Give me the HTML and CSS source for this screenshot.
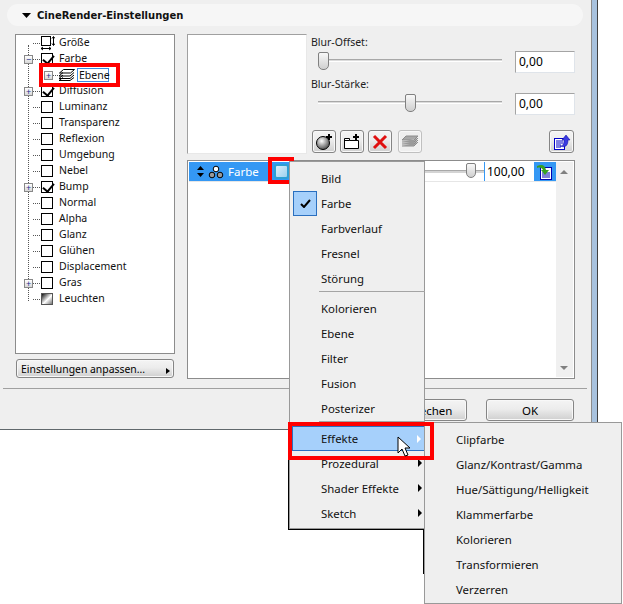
FILE: index.html
```html
<!DOCTYPE html>
<html lang="de">
<head>
<meta charset="utf-8">
<title>CineRender-Einstellungen</title>
<link rel="stylesheet" href="styles.css">
</head>
<body>
<div class="page">
  <div class="dialog">
    <div class="header">
      <svg class="caret" width="9" height="5" viewBox="0 0 9 5"><path d="M0 0h9L4.500 5z" fill="#000"/></svg>
      <span class="title">CineRender-Einstellungen</span>
    </div>
    <div class="main">
      <div class="left">
        <div class="tree">
          <span class="tree-line"></span>
          <div class="tree-row"><span class="exp-slot"></span><span class="dash"></span><svg class="ico size" width="14" height="15" viewBox="0 0 14 15"><rect x=".5" y=".5" width="9" height="9" fill="#fff" stroke="#000"/><path d="M12.500 1v8M11 2.500l1.500-2 1.500 2M11 7.500l1.500 2 1.500-2M0 12.500h10M2 11l-2 1.500 2 1.500M8 11l2 1.500-2 1.500" fill="none" stroke="#000"/></svg><span class="lbl">Größe</span></div>
          <div class="tree-row"><span class="exp-slot"><span class="exp">−</span></span><span class="dash"></span><span class="cb on"></span><span class="lbl">Farbe</span></div>
          <div class="tree-row sub"><span class="exp-slot"><span class="exp">+</span></span><span class="dash short"></span><svg class="ico layers" width="17" height="12" viewBox="0 0 17 12"><path d="M5.500.5H16.500L12.500 4H1.500zM5 3.500L1 7H12L16 3.500M5 6L1 9.500H12L16 6M5 8.500L1 11.500H12L16 8.500" fill="#fff" stroke="#000" stroke-width="1"/></svg><span class="lbl sel">Ebene</span></div>
          <div class="tree-row"><span class="exp-slot"><span class="exp">+</span></span><span class="dash"></span><span class="cb on"></span><span class="lbl">Diffusion</span></div>
          <div class="tree-row"><span class="exp-slot"></span><span class="dash"></span><span class="cb"></span><span class="lbl">Luminanz</span></div>
          <div class="tree-row"><span class="exp-slot"></span><span class="dash"></span><span class="cb"></span><span class="lbl">Transparenz</span></div>
          <div class="tree-row"><span class="exp-slot"></span><span class="dash"></span><span class="cb"></span><span class="lbl">Reflexion</span></div>
          <div class="tree-row"><span class="exp-slot"></span><span class="dash"></span><span class="cb"></span><span class="lbl">Umgebung</span></div>
          <div class="tree-row"><span class="exp-slot"></span><span class="dash"></span><span class="cb"></span><span class="lbl">Nebel</span></div>
          <div class="tree-row"><span class="exp-slot"><span class="exp">+</span></span><span class="dash"></span><span class="cb on"></span><span class="lbl">Bump</span></div>
          <div class="tree-row"><span class="exp-slot"></span><span class="dash"></span><span class="cb"></span><span class="lbl">Normal</span></div>
          <div class="tree-row"><span class="exp-slot"></span><span class="dash"></span><span class="cb"></span><span class="lbl">Alpha</span></div>
          <div class="tree-row"><span class="exp-slot"></span><span class="dash"></span><span class="cb"></span><span class="lbl">Glanz</span></div>
          <div class="tree-row"><span class="exp-slot"></span><span class="dash"></span><span class="cb"></span><span class="lbl">Glühen</span></div>
          <div class="tree-row"><span class="exp-slot"></span><span class="dash"></span><span class="cb"></span><span class="lbl">Displacement</span></div>
          <div class="tree-row"><span class="exp-slot"><span class="exp">+</span></span><span class="dash"></span><span class="cb"></span><span class="lbl">Gras</span></div>
          <div class="tree-row"><span class="exp-slot"></span><span class="dash"></span><span class="cb grad"></span><span class="lbl">Leuchten</span></div>
        </div>
        <div class="btn adapt"><span>Einstellungen anpassen...</span><svg width="4" height="6" viewBox="0 0 4 6"><path d="M0 0l4 3-4 3z" fill="#000"/></svg></div>
      </div>
      <div class="right">
        <div class="top">
          <div class="preview"></div>
          <div class="controls">
            <div class="field">
              <div class="field-label">Blur-Offset:</div>
              <div class="field-row">
                <div class="slider"><span class="knob k-start"></span></div>
                <div class="value">0,00</div>
              </div>
            </div>
            <div class="field">
              <div class="field-label">Blur-Stärke:</div>
              <div class="field-row">
                <div class="slider"><span class="knob k-mid"></span></div>
                <div class="value">0,00</div>
              </div>
            </div>
            <div class="tools">
              <div class="btn tool"><svg width="18" height="18" viewBox="0 0 18 18"><defs><radialGradient id="sph" cx="0.4" cy="0.35" r="0.7"><stop offset="0" stop-color="#fff"/><stop offset="1" stop-color="#444"/></radialGradient></defs><circle cx="8" cy="10" r="6.500" fill="url(#sph)" stroke="#000"/><path d="M14 1v6M11 4h6" stroke="#000" stroke-width="2"/></svg></div>
              <div class="btn tool"><svg width="18" height="18" viewBox="0 0 18 18"><path d="M1.500 5.500h5v2h9v8h-14zM1.500 7.500h5" fill="#fff" stroke="#000"/><path d="M13 1v6M10 4h6" stroke="#000" stroke-width="2"/></svg></div>
              <div class="btn tool"><svg width="18" height="18" viewBox="0 0 18 18"><path d="M3 3l12 12M15 3L3 15" stroke="#e01010" stroke-width="3" fill="none"/></svg></div>
              <div class="btn tool off"><svg width="18" height="14" viewBox="0 0 18 14"><path d="M5 1h12l-4 4H1zM1 7h12l4-4M1 9h12l4-4M1 11h12l4-4" fill="#a8a8a8" stroke="#8c8c8c"/></svg></div>
              <div class="tool-gap"></div>
              <div class="btn tool export"><svg width="18" height="18" viewBox="0 0 18 18"><rect x="1.500" y="5.500" width="10" height="11" fill="#fff" stroke="#0000c8"/><path d="M3 8h7M3 10h7M3 12h5M3 14h5" stroke="#0000c8"/><path d="M7 13c3 0 4-2 4-6H9l4-5 4 5h-2c0 6-3 8-8 6z" fill="#3a3ae0" stroke="#0000a0" stroke-width=".5"/></svg></div>
            </div>
          </div>
        </div>
        <div class="list">
          <div class="list-body">
            <div class="list-row">
              <div class="row-name">
                <svg width="7" height="11" viewBox="0 0 7 11"><path d="M3.500 0L7 4H0zM3.500 11L0 7h7z" fill="#000"/></svg>
                <svg class="tri" width="16" height="14" viewBox="0 0 16 14"><circle cx="8" cy="4" r="2.800" fill="#fff" stroke="#000"/><circle cx="4" cy="10" r="2.800" fill="#999" stroke="#000"/><circle cx="12" cy="10" r="2.800" fill="#999" stroke="#000"/></svg>
                <span>Farbe</span>
              </div>
              <div class="swatch-cell"><span class="swatch"></span></div>
              <div class="row-slider"><span class="knob k-end"></span></div>
              <div class="row-value">100,00</div>
              <div class="row-icon"><svg width="18" height="16" viewBox="0 0 18 16"><rect x="4.500" y="3.500" width="11" height="12" fill="#fff" stroke="#0000b0"/><path d="M6 9h8M6 11h8M6 13h8" stroke="#0000b0"/><path d="M1 2c5-2 8-1 9 4h3l-4 5-4-5h2C6 4 4 3 1 4z" fill="#38a020"/></svg></div>
            </div>
          </div>
          <div class="scrollbar"><span class="arrow up"></span><span class="arrow down"></span></div>
        </div>
      </div>
    </div>
    <div class="footer">
      <div class="btn action">Abbrechen</div>
      <div class="btn action">OK</div>
    </div>
  </div>

  <div class="mark mark-ebene"></div>
  <div class="mark mark-swatch"></div>

  <span class="shadow shadow-menu"></span>
  <span class="shadow shadow-sub"></span>

  <div class="menu main-menu">
    <div class="item">Bild</div>
    <div class="item checked"><span class="check"><svg width="11" height="9" viewBox="0 0 11 9"><path d="M1 5l3 3 6-7" fill="none" stroke="#000" stroke-width="2"/></svg></span>Farbe</div>
    <div class="item">Farbverlauf</div>
    <div class="item">Fresnel</div>
    <div class="item">Störung</div>
    <div class="sep"></div>
    <div class="item">Kolorieren</div>
    <div class="item">Ebene</div>
    <div class="item">Filter</div>
    <div class="item">Fusion</div>
    <div class="item">Posterizer</div>
    <div class="sep"></div>
    <div class="item has-sub active">Effekte</div>
    <div class="item has-sub">Prozedural</div>
    <div class="item has-sub">Shader Effekte</div>
    <div class="item has-sub">Sketch</div>
  </div>

  <div class="menu sub-menu">
    <div class="item">Clipfarbe</div>
    <div class="item">Glanz/Kontrast/Gamma</div>
    <div class="item">Hue/Sättigung/Helligkeit</div>
    <div class="item">Klammerfarbe</div>
    <div class="item">Kolorieren</div>
    <div class="item">Transformieren</div>
    <div class="item">Verzerren</div>
  </div>

  <div class="mark mark-effekte"></div>
  <svg class="cursor" width="14" height="22" viewBox="0 0 14 22"><path d="M1 1v16l4-4 3 7 3-1-3-7h5z" fill="#fff" stroke="#000"/></svg>
</div>
</body>
</html>
```
FILE: styles.css
```css
* { box-sizing: border-box; }
html, body { margin: 0; background: #fff; }
.page {
  position: relative;
  width: 623px;
  height: 604px;
  overflow: hidden;
  font-family: "Noto Sans", sans-serif;
  font-size: 10.5px;
  color: #000;
}
.dialog {
  width: 597px;
  height: 430px;
  background: #efefef;
  border-right: 5px solid #a8c2de;
  border-bottom: 1px solid #60686c;
  padding-top: 4px;
  box-shadow: inset -1px 0 0 #8c8c8c, 1px 0 0 #404040;
  display: flex;
  flex-direction: column;
}
.header {
  margin: 0 9px 0 7px;
  height: 22px;
  background: #f6f6f6;
  border-radius: 11px;
  display: flex;
  align-items: center;
  padding-left: 15px;
}
.caret { margin-right: 6px; }
.title {
  font-family: "DejaVu Sans", sans-serif;
  font-weight: 700;
  font-size: 10px;
  color: #111;
}
.main {
  display: flex;
  margin-top: 8px;
  padding-left: 15px;
}
.left {
  width: 160px;
  display: flex;
  flex-direction: column;
}
.tree {
  position: relative;
  height: 320px;
  background: #fff;
  border: 1px solid #8c8c8c;
}
.tree-line {
  position: absolute;
  left: 12px;
  top: 10px;
  height: 256px;
  border-left: 1px dotted #555;
}
.tree-row {
  position: relative;
  height: 16px;
  display: flex;
  align-items: center;
  padding-left: 8px;
}
.tree-row.sub { padding-left: 28px; }
.exp-slot {
  width: 9px;
  height: 9px;
  flex: none;
  position: relative;
  z-index: 1;
}
.exp {
  display: flex;
  align-items: center;
  justify-content: center;
  width: 9px;
  height: 9px;
  background: linear-gradient(#fff, #d8d8d8);
  border: 1px solid #888;
  font-size: 9px;
  line-height: 1;
  color: #1a2f8c;
}
.dash {
  width: 7px;
  border-top: 1px dotted #555;
  flex: none;
}
.dash.short { width: 5px; }
.cb {
  width: 12px;
  height: 12px;
  border: 1px solid #000;
  background: #fff;
  flex: none;
  position: relative;
  margin-left: 1px;
}
.cb.on::after {
  content: "";
  position: absolute;
  left: 3px;
  top: -1px;
  width: 5px;
  height: 9px;
  border-right: 2px solid #000;
  border-bottom: 2px solid #000;
  transform: rotate(40deg);
}
.cb.grad {
  background: linear-gradient(135deg, #111, #fff 55%, #777);
  border-color: #555;
}
.ico { flex: none; }
.ico.size { margin-left: 1px; }
.lbl { margin-left: 6px; white-space: nowrap; color: #111; line-height: 14px; position: relative; top: -1px; }
.size + .lbl { margin-left: 4px; }
.layers + .lbl { margin-left: 2px; }
.lbl.sel {
  border: 1px solid #3e8be0;
  padding: 0 1px;
  line-height: 12px;
  width: 32px;
  height: 14px;
  top: 0;
}
.btn {
  background: linear-gradient(#f4f4f4 0, #ececec 45%, #cfcfcf 100%);
  border: 1px solid #858585;
  border-radius: 3px;
  box-shadow: inset 0 0 0 1px #f8f8f8;
  display: flex;
  align-items: center;
  justify-content: center;
}
.adapt {
  margin: 5px 1px 0;
  height: 19px;
  justify-content: flex-start;
  padding-left: 4px;
  position: relative;
  font-size: 10.4px;
}
.adapt svg { position: absolute; right: 3px; bottom: 3px; }
.right {
  margin-left: 12px;
  width: 388px;
  display: flex;
  flex-direction: column;
}
.top {
  display: flex;
  height: 120px;
}
.preview {
  width: 120px;
  height: 120px;
  background: #fff;
  border: 1px solid #a0a0a0;
  border-right-color: #e8e8e8;
  border-bottom-color: #e8e8e8;
}
.controls {
  flex: 1;
  padding-left: 4px;
  display: flex;
  flex-direction: column;
}
.field { height: 42px; padding-top: 2px; }
.field-label { height: 12px; line-height: 12px; color: #222; }
.field-row { display: flex; align-items: center; margin-top: 3px; }
.slider {
  position: relative;
  margin: 0 0 4px 7px;
  width: 184px;
  height: 3px;
  border-top: 1px solid #a8a8a8;
  background: #dcdcdc;
  border-bottom: 1px solid #fff;
}
.value {
  margin-left: 13px;
  width: 60px;
  height: 22px;
  background: #fff;
  border: 1px solid #a4a4a4;
  border-right-color: #dfe4ea;
  border-bottom-color: #dfe4ea;
  padding-left: 3px;
  font-size: 12px;
  line-height: 20px;
}
.knob {
  position: absolute;
  top: -8px;
  width: 11px;
  height: 18px;
  background: linear-gradient(#f8f8f8, #cfcfcf);
  border: 1px solid #808080;
  border-radius: 2px 2px 5px 5px;
}
.k-start { left: 0; }
.k-mid { left: 87px; }
.tools {
  display: flex;
  gap: 4px;
  margin-top: 12px;
  padding-left: 1px;
  height: 23px;
  flex: none;
}
.tool {
  width: 24px;
  height: 23px;
}
.tool.off {
  margin-left: 2px;
  border-color: #c0c0c0;
  background: #efefef;
}
.tool-gap { flex: 1; }
.tool.export { width: 25px; margin-right: 1px; }
.list {
  margin-top: 6px;
  height: 219px;
  border: 1px solid #8c8c8c;
  background: #fff;
  display: flex;
  padding: 1px;
}
.list-body { flex: 1; }
.list-row {
  height: 20px;
  display: flex;
  align-items: stretch;
  border-bottom: 1px solid #e6e6e6;
}
.row-name {
  width: 83px;
  background: #3498f4;
  color: #fff;
  display: flex;
  align-items: center;
  padding-left: 8px;
  gap: 4px;
  font-size: 11.5px;
}
.swatch-cell {
  width: 18px;
  background: #3498f4;
  display: flex;
  align-items: center;
  justify-content: center;
}
.swatch {
  width: 15px;
  height: 15px;
  background: linear-gradient(135deg, #dceffb, #9dd0ee);
  border: 2px solid #2e9fd4;
  border-radius: 3px;
}
.row-slider {
  position: relative;
  width: 194px;
  align-self: center;
  height: 3px;
  background: #d4d4d4;
  border-top: 1px solid #a8a8a8;
}
.row-slider .k-end { left: 176px; top: -8px; width: 10px; height: 15px; }
.row-value {
  width: 50px;
  border-left: 1px solid #3498f4;
  background: #fff;
  padding-left: 2px;
  font-size: 12px;
  line-height: 19px;
}
.row-icon {
  width: 22px;
  background: #3498f4;
  display: flex;
  align-items: center;
  justify-content: center;
}
.scrollbar {
  width: 17px;
  background: #f0f0f0;
  position: relative;
}
.arrow {
  position: absolute;
  left: 4px;
  width: 0;
  height: 0;
  border-left: 4px solid transparent;
  border-right: 4px solid transparent;
}
.arrow.up { top: 8px; border-bottom: 4px solid #808080; }
.arrow.down { bottom: 7px; border-top: 4px solid #808080; }
.footer {
  margin: 9px 5px 0 3px;
  padding: 10px 13px 0 0;
  border-top: 1px solid #a0a0a0;
  display: flex;
  justify-content: flex-end;
  gap: 19px;
  font-size: 11.5px;
}
.action {
  width: 88px;
  height: 22px;
}
.menu {
  position: absolute;
  background: #efefef;
  border: 1px solid #999;
  font-size: 11.4px;
  color: #111;
}
.main-menu { left: 289px; top: 161px; width: 136px; height: 368px; padding-top: 4px; }
.sub-menu { left: 424px; top: 422px; width: 198px; height: 182px; padding-top: 4px; }
.item {
  position: relative;
  height: 25px;
  line-height: 25px;
  white-space: nowrap;
  padding-left: 31px;
}
.sep {
  height: 5px;
  margin-left: 29px;
  position: relative;
  width: 106px;
}
.sep::after {
  content: "";
  position: absolute;
  left: 0;
  right: 0;
  top: 0;
  border-top: 1px solid #a4a4a4;
}
.check {
  position: absolute;
  left: 3px;
  top: 0;
  width: 24px;
  height: 25px;
  background: #a6d0fb;
  border: 1px solid #2a6fbf;
  display: flex;
  align-items: center;
  justify-content: center;
}
.has-sub::after {
  content: "";
  position: absolute;
  right: 2px;
  top: 8px;
  border-left: 4px solid #000;
  border-top: 4px solid transparent;
  border-bottom: 4px solid transparent;
}
.active {
  background: #a6d0fb;
  border: 1px solid #2a6fbf;
  border-right: 0;
  margin-left: 2px;
  padding-left: 28px;
  line-height: 24px;
}
.active::after { border-left-color: #fff; right: 3px; }
.mark {
  position: absolute;
  border: 4px solid #f00;
}
.mark-ebene { left: 39px; top: 63px; width: 81px; height: 24px; }
.mark-swatch { left: 268px; top: 157px; width: 26px; height: 27px; }
.mark-effekte { left: 288px; top: 422px; width: 146px; height: 38px; }
.shadow { position: absolute; }
.shadow-menu {
  left: 288px;
  top: 430px;
  width: 136px;
  height: 100px;
  border-left: 1px solid #000;
  border-bottom: 1px solid #000;
}
.shadow-sub {
  left: 423px;
  top: 529px;
  height: 45px;
  border-left: 1px solid #000;
}
.cursor { position: absolute; left: 397px; top: 436px; }
```
